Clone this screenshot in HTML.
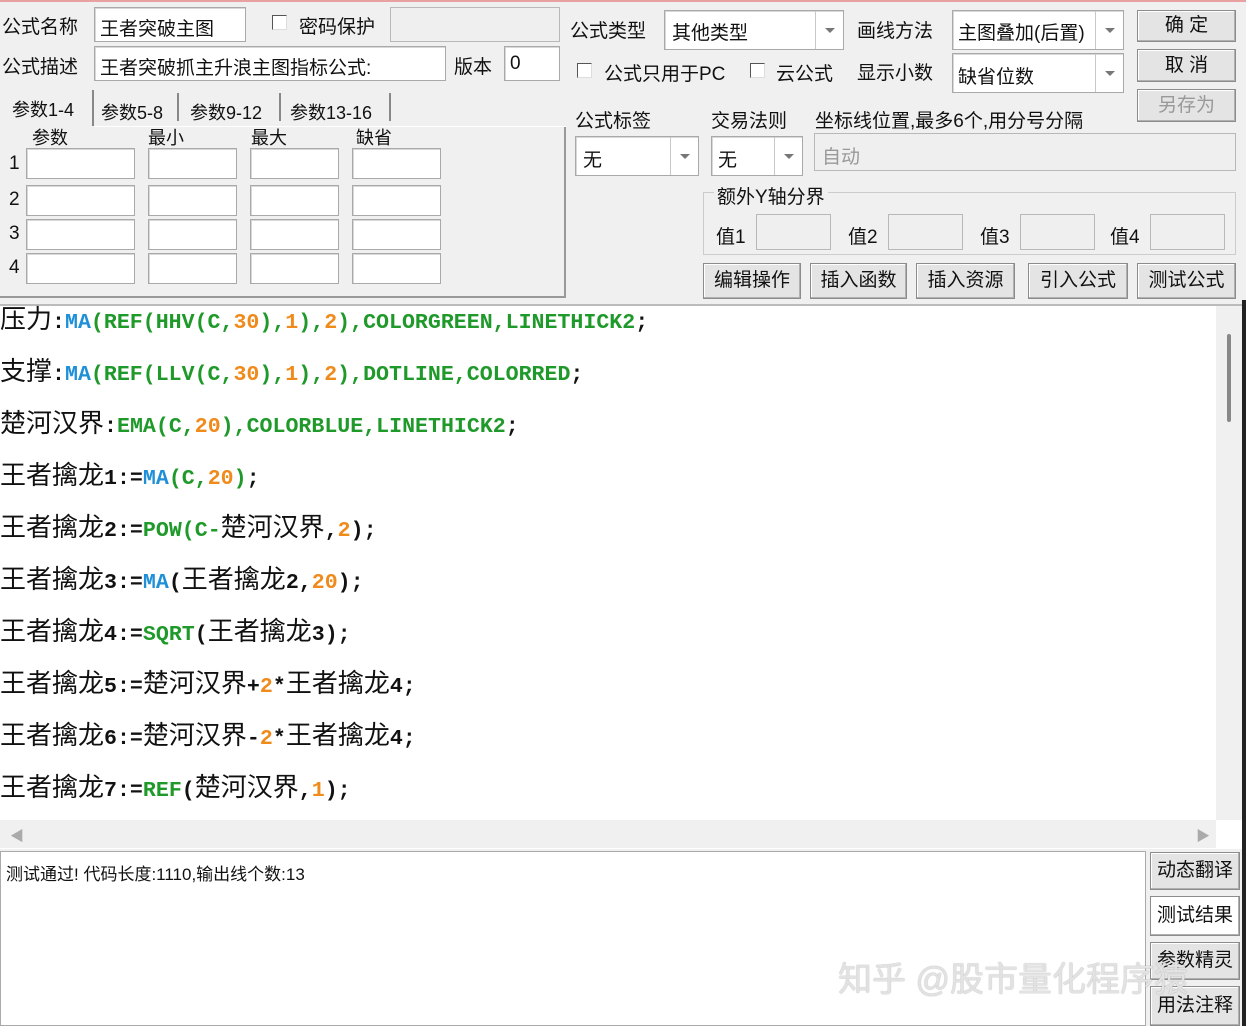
<!DOCTYPE html>
<html><head><meta charset="utf-8"><style>
*{margin:0;padding:0;box-sizing:border-box}
body{width:1246px;height:1026px;background:#f0f0f0;position:relative;overflow:hidden;font-family:"Liberation Sans","Noto Sans CJK SC",sans-serif;font-size:19px;color:#111}
.a{position:absolute;white-space:nowrap}
.in{position:absolute;background:#fff;border:1px solid #a9a9a9;box-shadow:inset 1px 1px 0 #d8d8d8}
.dis{position:absolute;background:#efefef;border:1px solid #b8b8b8}
.btn{position:absolute;background:#e4e4e4;border:1px solid #8c8c8c;box-shadow:inset -1px -1px 0 #b0b0b0,inset 1px 1px 0 #fff;text-align:center;font-size:19px}
.cb{position:absolute;width:15px;height:15px;background:#fff;border:1px solid #555;border-right-color:#ddd;border-bottom-color:#ddd}
.dd{position:absolute;right:0;top:0;bottom:0;width:28px;border-left:1px solid #c8c8c8}
.dd:after{content:"";position:absolute;left:9px;top:50%;margin-top:-2px;border:5px solid transparent;border-top:5px solid #777}
.code{position:absolute;left:0;font-size:26px;white-space:nowrap;line-height:30px}
.m{font-family:"Liberation Mono",monospace;font-weight:bold;font-size:21.6px}
.b{color:#1f90d8}.g{color:#1f9a2a}.o{color:#f08a1a}.k{color:#111}
.tab{position:absolute;font-size:18px;white-space:nowrap}
.sep{position:absolute;width:2px;background:#888}
</style></head><body>
<div class="a" style="left:0;top:0;width:1246px;height:2px;background:#e9a0a0"></div>
<div class="a" style="left:2px;top:12px">公式名称</div>
<div class="in" style="left:94px;top:7px;width:152px;height:35px"></div>
<div class="a" style="left:100px;top:14px">王者突破主图</div>
<div class="cb" style="left:272px;top:15px"></div>
<div class="a" style="left:299px;top:12px">密码保护</div>
<div class="dis" style="left:390px;top:7px;width:170px;height:35px"></div>
<div class="a" style="left:2px;top:52px">公式描述</div>
<div class="in" style="left:94px;top:46px;width:352px;height:35px"></div>
<div class="a" style="left:100px;top:53px">王者突破抓主升浪主图指标公式:</div>
<div class="a" style="left:454px;top:52px">版本</div>
<div class="in" style="left:504px;top:46px;width:56px;height:35px"></div>
<div class="a" style="left:510px;top:53px">0</div>

<div class="tab" style="left:12px;top:96px">参数1-4</div>
<div class="sep" style="left:92px;top:90px;height:36px"></div>
<div class="tab" style="left:101px;top:99px">参数5-8</div>
<div class="sep" style="left:177px;top:93px;height:28px"></div>
<div class="tab" style="left:190px;top:99px">参数9-12</div>
<div class="sep" style="left:279px;top:93px;height:28px"></div>
<div class="tab" style="left:290px;top:99px">参数13-16</div>
<div class="sep" style="left:389px;top:93px;height:28px"></div>
<div class="a" style="left:0;top:126px;width:566px;height:172px;border-right:2px solid #999;border-bottom:2px solid #999"></div>
<div class="a" style="left:94px;top:126px;width:472px;height:1px;background:#fff"></div>
<div class="tab" style="left:32px;top:124px">参数</div>
<div class="tab" style="left:148px;top:124px">最小</div>
<div class="tab" style="left:251px;top:124px">最大</div>
<div class="tab" style="left:356px;top:124px">缺省</div>
<div class="a" style="left:9px;top:153px">1</div><div class="a" style="left:9px;top:189px">2</div><div class="a" style="left:9px;top:223px">3</div><div class="a" style="left:9px;top:257px">4</div>
<div class="in" style="left:26px;top:148px;width:109px;height:31px"></div><div class="in" style="left:148px;top:148px;width:89px;height:31px"></div><div class="in" style="left:250px;top:148px;width:89px;height:31px"></div><div class="in" style="left:352px;top:148px;width:89px;height:31px"></div>
<div class="in" style="left:26px;top:185px;width:109px;height:31px"></div><div class="in" style="left:148px;top:185px;width:89px;height:31px"></div><div class="in" style="left:250px;top:185px;width:89px;height:31px"></div><div class="in" style="left:352px;top:185px;width:89px;height:31px"></div>
<div class="in" style="left:26px;top:219px;width:109px;height:31px"></div><div class="in" style="left:148px;top:219px;width:89px;height:31px"></div><div class="in" style="left:250px;top:219px;width:89px;height:31px"></div><div class="in" style="left:352px;top:219px;width:89px;height:31px"></div>
<div class="in" style="left:26px;top:253px;width:109px;height:31px"></div><div class="in" style="left:148px;top:253px;width:89px;height:31px"></div><div class="in" style="left:250px;top:253px;width:89px;height:31px"></div><div class="in" style="left:352px;top:253px;width:89px;height:31px"></div>

<div class="a" style="left:570px;top:16px">公式类型</div>
<div class="in" style="left:664px;top:10px;width:180px;height:40px"><div class="dd"></div></div>
<div class="a" style="left:672px;top:18px">其他类型</div>
<div class="a" style="left:857px;top:16px">画线方法</div>
<div class="in" style="left:952px;top:10px;width:172px;height:40px"><div class="dd"></div></div>
<div class="a" style="left:958px;top:18px">主图叠加(后置)</div>
<div class="btn" style="left:1137px;top:10px;width:99px;height:32px;line-height:30px">确 定</div>
<div class="cb" style="left:577px;top:63px"></div>
<div class="a" style="left:604px;top:59px">公式只用于PC</div>
<div class="cb" style="left:750px;top:63px"></div>
<div class="a" style="left:776px;top:59px">云公式</div>
<div class="a" style="left:857px;top:58px">显示小数</div>
<div class="in" style="left:952px;top:53px;width:172px;height:40px"><div class="dd"></div></div>
<div class="a" style="left:958px;top:62px">缺省位数</div>
<div class="btn" style="left:1137px;top:49px;width:99px;height:33px;line-height:31px">取 消</div>
<div class="btn" style="left:1137px;top:89px;width:99px;height:33px;line-height:31px;color:#999">另存为</div>
<div class="a" style="left:575px;top:106px">公式标签</div>
<div class="a" style="left:711px;top:106px">交易法则</div>
<div class="a" style="left:815px;top:106px">坐标线位置,最多6个,用分号分隔</div>
<div class="in" style="left:575px;top:136px;width:124px;height:40px"><div class="dd"></div></div>
<div class="a" style="left:583px;top:145px">无</div>
<div class="in" style="left:711px;top:136px;width:92px;height:40px"><div class="dd"></div></div>
<div class="a" style="left:718px;top:145px">无</div>
<div class="dis" style="left:814px;top:133px;width:422px;height:38px"></div>
<div class="a" style="left:822px;top:142px;color:#999">自动</div>
<div class="a" style="left:703px;top:192px;width:533px;height:63px;border:1px solid #ccc"></div>
<div class="a" style="left:714px;top:182px;background:#f0f0f0;padding:0 3px">额外Y轴分界</div>
<div class="a" style="left:716px;top:222px">值1</div><div class="dis" style="left:756px;top:214px;width:75px;height:36px"></div>
<div class="a" style="left:848px;top:222px">值2</div><div class="dis" style="left:888px;top:214px;width:75px;height:36px"></div>
<div class="a" style="left:980px;top:222px">值3</div><div class="dis" style="left:1020px;top:214px;width:75px;height:36px"></div>
<div class="a" style="left:1110px;top:222px">值4</div><div class="dis" style="left:1150px;top:214px;width:75px;height:36px"></div>
<div class="btn" style="left:703px;top:263px;width:98px;height:36px;line-height:34px">编辑操作</div>
<div class="btn" style="left:810px;top:263px;width:97px;height:36px;line-height:34px">插入函数</div>
<div class="btn" style="left:916px;top:263px;width:99px;height:36px;line-height:34px">插入资源</div>
<div class="btn" style="left:1028px;top:263px;width:100px;height:36px;line-height:34px">引入公式</div>
<div class="btn" style="left:1137px;top:263px;width:99px;height:36px;line-height:34px">测试公式</div>

<div class="a" style="left:0;top:304px;width:1243px;height:545px;background:#fff;border-top:2px solid #bbb"></div>
<div class="a" style="left:1216px;top:306px;width:26px;height:514px;background:#f0f0f0"></div>
<div class="a" style="left:1227px;top:334px;width:4px;height:88px;background:#888;border-radius:2px"></div>
<div class="a" style="left:0;top:820px;width:1216px;height:28px;background:#f0f0f0"></div>
<div class="a" style="left:10px;top:826px;color:#aaa;font-size:14px">◀</div>
<div class="a" style="left:1196px;top:826px;color:#aaa;font-size:14px">▶</div>
<div class="a" style="left:1242px;top:300px;width:4px;height:726px;background:#222"></div>

<div class="code" style="top:304px">压力<span class="m"><span class="k">:</span><span class="b">MA</span><span class="g">(REF(HHV(C,</span><span class="o">30</span><span class="g">),</span><span class="o">1</span><span class="g">),</span><span class="o">2</span><span class="g">),COLORGREEN,LINETHICK2</span><span class="k">;</span></span></div>
<div class="code" style="top:356px">支撑<span class="m"><span class="k">:</span><span class="b">MA</span><span class="g">(REF(LLV(C,</span><span class="o">30</span><span class="g">),</span><span class="o">1</span><span class="g">),</span><span class="o">2</span><span class="g">),DOTLINE,COLORRED</span><span class="k">;</span></span></div>
<div class="code" style="top:408px">楚河汉界<span class="m"><span class="k">:</span><span class="g">EMA(C,</span><span class="o">20</span><span class="g">),COLORBLUE,LINETHICK2</span><span class="k">;</span></span></div>
<div class="code" style="top:460px">王者擒龙<span class="m">1:=<span class="b">MA</span><span class="g">(C,</span><span class="o">20</span><span class="g">)</span>;</span></div>
<div class="code" style="top:512px">王者擒龙<span class="m">2:=<span class="g">POW(C-</span></span>楚河汉界<span class="m">,<span class="o">2</span>);</span></div>
<div class="code" style="top:564px">王者擒龙<span class="m">3:=<span class="b">MA</span>(</span>王者擒龙<span class="m">2,<span class="o">20</span>);</span></div>
<div class="code" style="top:616px">王者擒龙<span class="m">4:=<span class="g">SQRT</span>(</span>王者擒龙<span class="m">3);</span></div>
<div class="code" style="top:668px">王者擒龙<span class="m">5:=</span>楚河汉界<span class="m">+<span class="o">2</span>*</span>王者擒龙<span class="m">4;</span></div>
<div class="code" style="top:720px">王者擒龙<span class="m">6:=</span>楚河汉界<span class="m">-<span class="o">2</span>*</span>王者擒龙<span class="m">4;</span></div>
<div class="code" style="top:772px">王者擒龙<span class="m">7:=<span class="g">REF</span>(</span>楚河汉界<span class="m">,<span class="o">1</span>);</span></div>

<div class="a" style="left:0;top:851px;width:1146px;height:175px;background:#fff;border:1px solid #aaa"></div>
<div class="a" style="left:6px;top:860px;font-size:17px">测试通过! 代码长度:1110,输出线个数:13</div>
<div class="btn" style="left:1150px;top:852px;width:90px;height:38px;line-height:36px">动态翻译</div>
<div class="btn" style="left:1150px;top:896px;width:90px;height:40px;line-height:38px;background:#fff">测试结果</div>
<div class="btn" style="left:1150px;top:942px;width:90px;height:38px;line-height:36px">参数精灵</div>
<div class="btn" style="left:1150px;top:986px;width:90px;height:40px;line-height:38px">用法注释</div>
<div class="a" style="left:838px;top:952px;font-size:34px;color:rgba(235,235,235,0.9);text-shadow:0 0 1px #888">知乎 @股市量化程序猿</div>
</body></html>
